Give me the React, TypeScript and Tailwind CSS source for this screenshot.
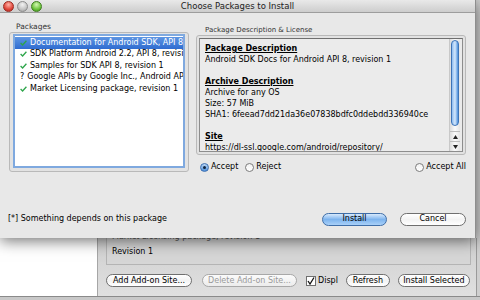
import React from "react";

const PACKAGES = [
  { mark: "ok", label: "Documentation for Android SDK, API 8, revision 1", selected: true },
  { mark: "ok", label: "SDK Platform Android 2.2, API 8, revision 2" },
  { mark: "ok", label: "Samples for SDK API 8, revision 1" },
  { mark: "?", label: "Google APIs by Google Inc., Android API 8, revision 2" },
  { mark: "ok", label: "Market Licensing package, revision 1" },
];

function Check() {
  return (
    <svg width="7" height="6" viewBox="0 0 7 6" className="shrink-0">
      <path d="M0.6 3 L2.6 5 L6.4 0.8" fill="none" stroke="#2da54a" strokeWidth="1.3" />
    </svg>
  );
}

function Radio({ on, label }: { on?: boolean; label: string }) {
  return (
    <div className="flex items-center gap-[2px]">
      {on ? (
        <span className="w-[9px] h-[9px] rounded-full border border-[#3d6fb0] bg-gradient-to-b from-[#bcd8f6] to-[#4d8fda] flex items-center justify-center">
          <span className="w-[3px] h-[3px] rounded-full bg-[#10243d]" />
        </span>
      ) : (
        <span className="w-[9px] h-[9px] rounded-full border border-[#7c7c7c] bg-gradient-to-b from-[#f2f2f2] to-[#ffffff]" />
      )}
      <span>{label}</span>
    </div>
  );
}

function Pill({
  children,
  w,
  blue,
  disabled,
}: {
  children: React.ReactNode;
  w: string;
  blue?: boolean;
  disabled?: boolean;
}) {
  return (
    <div
      className={
        "h-[13px] rounded-full border flex items-center justify-center leading-none " +
        w +
        (blue
          ? " border-[#3f6ea8] bg-gradient-to-b from-[#d7e9fc] via-[#7db4ee] to-[#a9d0f8] text-black"
          : disabled
          ? " border-[#a8a8a8] bg-gradient-to-b from-[#fbfbfb] to-[#ececec] text-[#9a9a9a]"
          : " border-[#6f6f6f] bg-gradient-to-b from-[#ffffff] via-[#f3f3f3] to-[#ffffff] text-black")
      }
    >
      {children}
    </div>
  );
}

export default function App() {
  return (
    <div className="w-[480px] h-[300px] overflow-hidden bg-[#d8d8d8] font-['DejaVu_Sans',sans-serif] text-[8px] text-black">
      {/* sheet dialog */}
      <div className="flex h-[238px]">
        <div className="relative z-10 w-[476px] flex flex-col bg-[#e8e8e8] border-r border-[#8e8e8e] shadow-[0_3px_14px_rgba(0,0,0,0.55)]">
          <div className="h-[13px] shrink-0 relative flex items-center justify-center border-b border-[#9d9d9d] bg-gradient-to-b from-[#e9e9e9] to-[#cdcdcd]">
            <div className="absolute left-[3px] top-[1px] flex gap-[3px]">
              <span className="w-[11px] h-[11px] rounded-full border border-[#9a2a22] bg-[radial-gradient(circle_at_50%_30%,#ffb3a8,#e0463a_60%,#a8261c)]" />
              <span className="w-[11px] h-[11px] rounded-full border border-[#8c8c8c] bg-[radial-gradient(circle_at_50%_30%,#f2f2f2,#c4c4c4_60%,#9c9c9c)]" />
              <span className="w-[11px] h-[11px] rounded-full border border-[#3f7d20] bg-[radial-gradient(circle_at_50%_30%,#d3f7b2,#6cc33c_60%,#3b8a1a)]" />
            </div>
            <span className="text-[8.5px] text-[#222]">Choose Packages to Install</span>
          </div>

          <div className="flex-1 flex flex-col">
            <div className="flex pl-[9px]">
              {/* packages */}
              <div className="w-[180px] pt-[9px] flex flex-col">
                <div className="h-[10px] leading-[10px] pl-[7px] text-[7.5px] text-[#333]">Packages</div>
                <div className="h-[140px] rounded-[3px] border border-[#b9b9b9] bg-[#e2e2e2] p-[1px] flex">
                  <div className="flex-1 mx-[2px] mb-[2px] border-2 border-[#7fa9df] bg-white pt-[1px] overflow-hidden">
                    {PACKAGES.map((p) => (
                      <div
                        key={p.label}
                        className={
                          "h-[11.5px] flex items-center gap-[3px] pl-[5px] whitespace-nowrap " +
                          (p.selected ? "bg-gradient-to-b from-[#5d95e3] to-[#2f6cd0] text-white" : "")
                        }
                      >
                        {p.mark === "ok" ? (
                          <Check />
                        ) : (
                          <span className="w-[7px] text-center leading-none">?</span>
                        )}
                        <span>{p.label}</span>
                      </div>
                    ))}
                  </div>
                </div>
              </div>

              {/* description */}
              <div className="w-[270px] ml-[7px] pt-[12px] flex flex-col">
                <div className="h-[10px] leading-[10px] pl-[9px] text-[7px] text-[#333]">
                  Package Description &amp; License
                </div>
                <div className="h-[120px] rounded-[3px] border border-[#b9b9b9] bg-[#e2e2e2] p-[2px] flex">
                  <div className="flex-1 flex border border-[#8d8d8d] border-t-[#6f6f6f] bg-[#ebebeb] overflow-hidden">
                    <div className="flex-1 pl-[5px] pt-[4px] leading-[11px] whitespace-nowrap overflow-hidden">
                      <div className="font-bold underline">Package Description</div>
                      <div>Android SDK Docs for Android API 8, revision 1</div>
                      <div>&nbsp;</div>
                      <div className="font-bold underline">Archive Description</div>
                      <div>Archive for any OS</div>
                      <div>Size: 57 MiB</div>
                      <div>SHA1: 6feead7dd21da36e07838bdfc0ddebdd336940ce</div>
                      <div>&nbsp;</div>
                      <div className="font-bold underline">Site</div>
                      <div>https://dl-ssl.google.com/android/repository/</div>
                      <div>repository.xml</div>
                    </div>
                    {/* scrollbar */}
                    <div className="w-[11px] mr-[2px] flex flex-col bg-gradient-to-r from-[#dcdcdc] via-[#fafafa] to-[#e4e4e4] border-l border-[#c8c8c8]">
                      <div className="mx-[1px] mt-[1px] h-[86px] rounded-full border border-[#3d74b8] bg-gradient-to-r from-[#8fbcef] via-[#d4e8fc] to-[#4b90dc]" />
                      <div className="flex-1" />
                      <div className="h-[10px] flex items-center justify-center border-t border-[#bdbdbd]">
                        <svg width="5" height="4" viewBox="0 0 5 4"><path d="M2.5 0 L5 4 L0 4 Z" fill="#222" /></svg>
                      </div>
                      <div className="h-[10px] flex items-center justify-center border-t border-[#bdbdbd]">
                        <svg width="5" height="4" viewBox="0 0 5 4"><path d="M0 0 L5 0 L2.5 4 Z" fill="#222" /></svg>
                      </div>
                    </div>
                  </div>
                </div>
                <div className="mt-[6px] h-[12px] flex items-center pl-[4px]">
                  <Radio on label="Accept" />
                  <div className="ml-[7px]">
                    <Radio label="Reject" />
                  </div>
                  <div className="ml-auto">
                    <Radio label="Accept All" />
                  </div>
                </div>
              </div>
            </div>

            <div className="mt-auto mb-[12px] h-[14px] flex items-center pl-[8px] pr-[9px]">
              <span>[*] Something depends on this package</span>
              <div className="ml-auto flex gap-[13px]">
                <Pill w="w-[65px]" blue>Install</Pill>
                <Pill w="w-[66px]">Cancel</Pill>
              </div>
            </div>
          </div>
        </div>
        <div className="flex-1 bg-[#cfcfcf]" />
      </div>

      {/* background window */}
      <div className="flex h-[58px]">
        <div className="w-[98px] bg-white border-r border-[#a6a6a6]" />
        <div className="flex-1 flex flex-col pl-[8px] pr-[5px] bg-gradient-to-b from-[#cfcfcf] to-[#e0e0e0] border-r border-[#9a9a9a]">
          <div className="h-[27px] border border-t-0 border-[#b4b4b4] bg-[#d6d6d6] overflow-hidden pl-[5px] leading-[11px]">
            <div className="-mt-[7px] text-[#555]">Market Licensing package, revision 1</div>
            <div className="mt-[4px]">Revision 1</div>
          </div>
          <div className="mt-[9px] flex items-center">
            <Pill w="w-[86px]">Add Add-on Site...</Pill>
            <div className="ml-[10px]">
              <Pill w="w-[95px]" disabled>
                Delete Add-on Site...
              </Pill>
            </div>
            <div className="ml-[9px] flex items-center gap-[2px]">
              <span className="w-[10px] h-[10px] border border-[#6f6f6f] bg-white flex items-center justify-center">
                <svg width="8" height="8" viewBox="0 0 8 8">
                  <path d="M1 4 L3 7 L7 0.5" fill="none" stroke="#111" strokeWidth="1.3" />
                </svg>
              </span>
              <span>Displ</span>
            </div>
            <div className="ml-[8px]">
              <Pill w="w-[44px]">Refresh</Pill>
            </div>
            <div className="ml-[8px]">
              <Pill w="w-[72px]">Install Selected</Pill>
            </div>
          </div>
        </div>
        <div className="w-[3px] bg-[#cfcfcf]" />
      </div>
      <div className="h-[4px] border-t border-[#8a8a8a] bg-[#c8c8c8]" />
    </div>
  );
}
